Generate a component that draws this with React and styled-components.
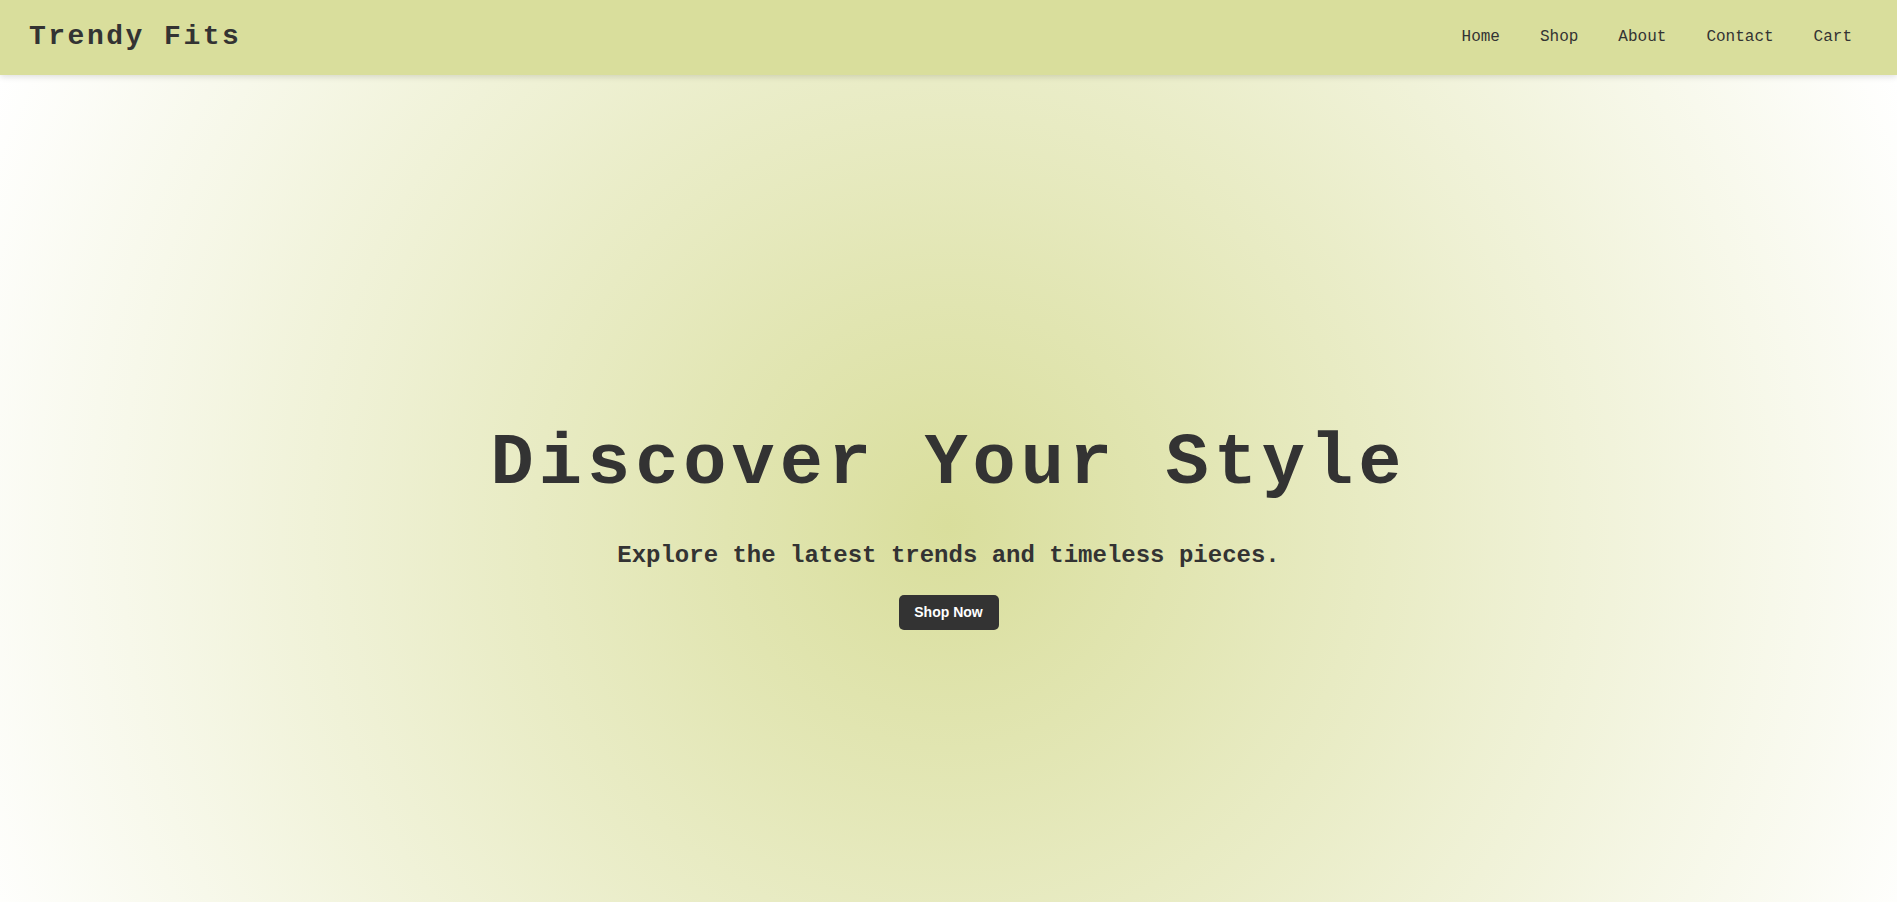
import React from 'react';
import styled, { createGlobalStyle } from 'styled-components';

const GlobalStyle = createGlobalStyle`
  * {
    box-sizing: border-box;
  }
  body {
    margin: 0;
    font-family: 'Liberation Mono', 'Courier New', monospace;
    color: #333333;
    background: #ffffff;
  }
`;

const Header = styled.header`
  display: flex;
  align-items: center;
  justify-content: space-between;
  height: 75px;
  padding: 0 45px 2px 29px;
  background: #d9de9c;
  box-shadow: 0 2px 6px rgba(0, 0, 0, 0.12);
  position: relative;
  z-index: 1;
`;

const Logo = styled.div`
  font-size: 28px;
  font-weight: 700;
  letter-spacing: 2.5px;
  color: #333333;
`;

const Nav = styled.nav`
  display: flex;
  gap: 40px;
`;

const NavLink = styled.a`
  font-size: 16px;
  color: #333333;
  text-decoration: none;
  cursor: pointer;
`;

const Hero = styled.section`
  min-height: 100vh;
  display: flex;
  flex-direction: column;
  align-items: center;
  justify-content: center;
  text-align: center;
  background: radial-gradient(circle, #d9de9c, #ffffff);
`;

const Title = styled.h1`
  margin: 0;
  font-size: 72px;
  font-weight: 700;
  letter-spacing: 5px;
  color: #333333;
`;

const Subtitle = styled.p`
  margin: 37px 0 26px;
  font-size: 24px;
  font-weight: 700;
  color: #333333;
`;

const Button = styled.button`
  width: 100px;
  height: 35px;
  border: 0;
  border-radius: 5px;
  background: #333333;
  color: #ffffff;
  font-family: 'Liberation Sans', Arial, sans-serif;
  font-size: 14px;
  font-weight: 700;
  cursor: pointer;
`;

const links = ['Home', 'Shop', 'About', 'Contact', 'Cart'];

const App = () => {
  return (
    <>
      <GlobalStyle />
      <Header>
        <Logo>Trendy Fits</Logo>
        <Nav>
          {links.map((l) => (
            <NavLink key={l}>{l}</NavLink>
          ))}
        </Nav>
      </Header>
      <Hero>
        <Title>Discover Your Style</Title>
        <Subtitle>Explore the latest trends and timeless pieces.</Subtitle>
        <Button>Shop Now</Button>
      </Hero>
    </>
  );
};

export default App;
